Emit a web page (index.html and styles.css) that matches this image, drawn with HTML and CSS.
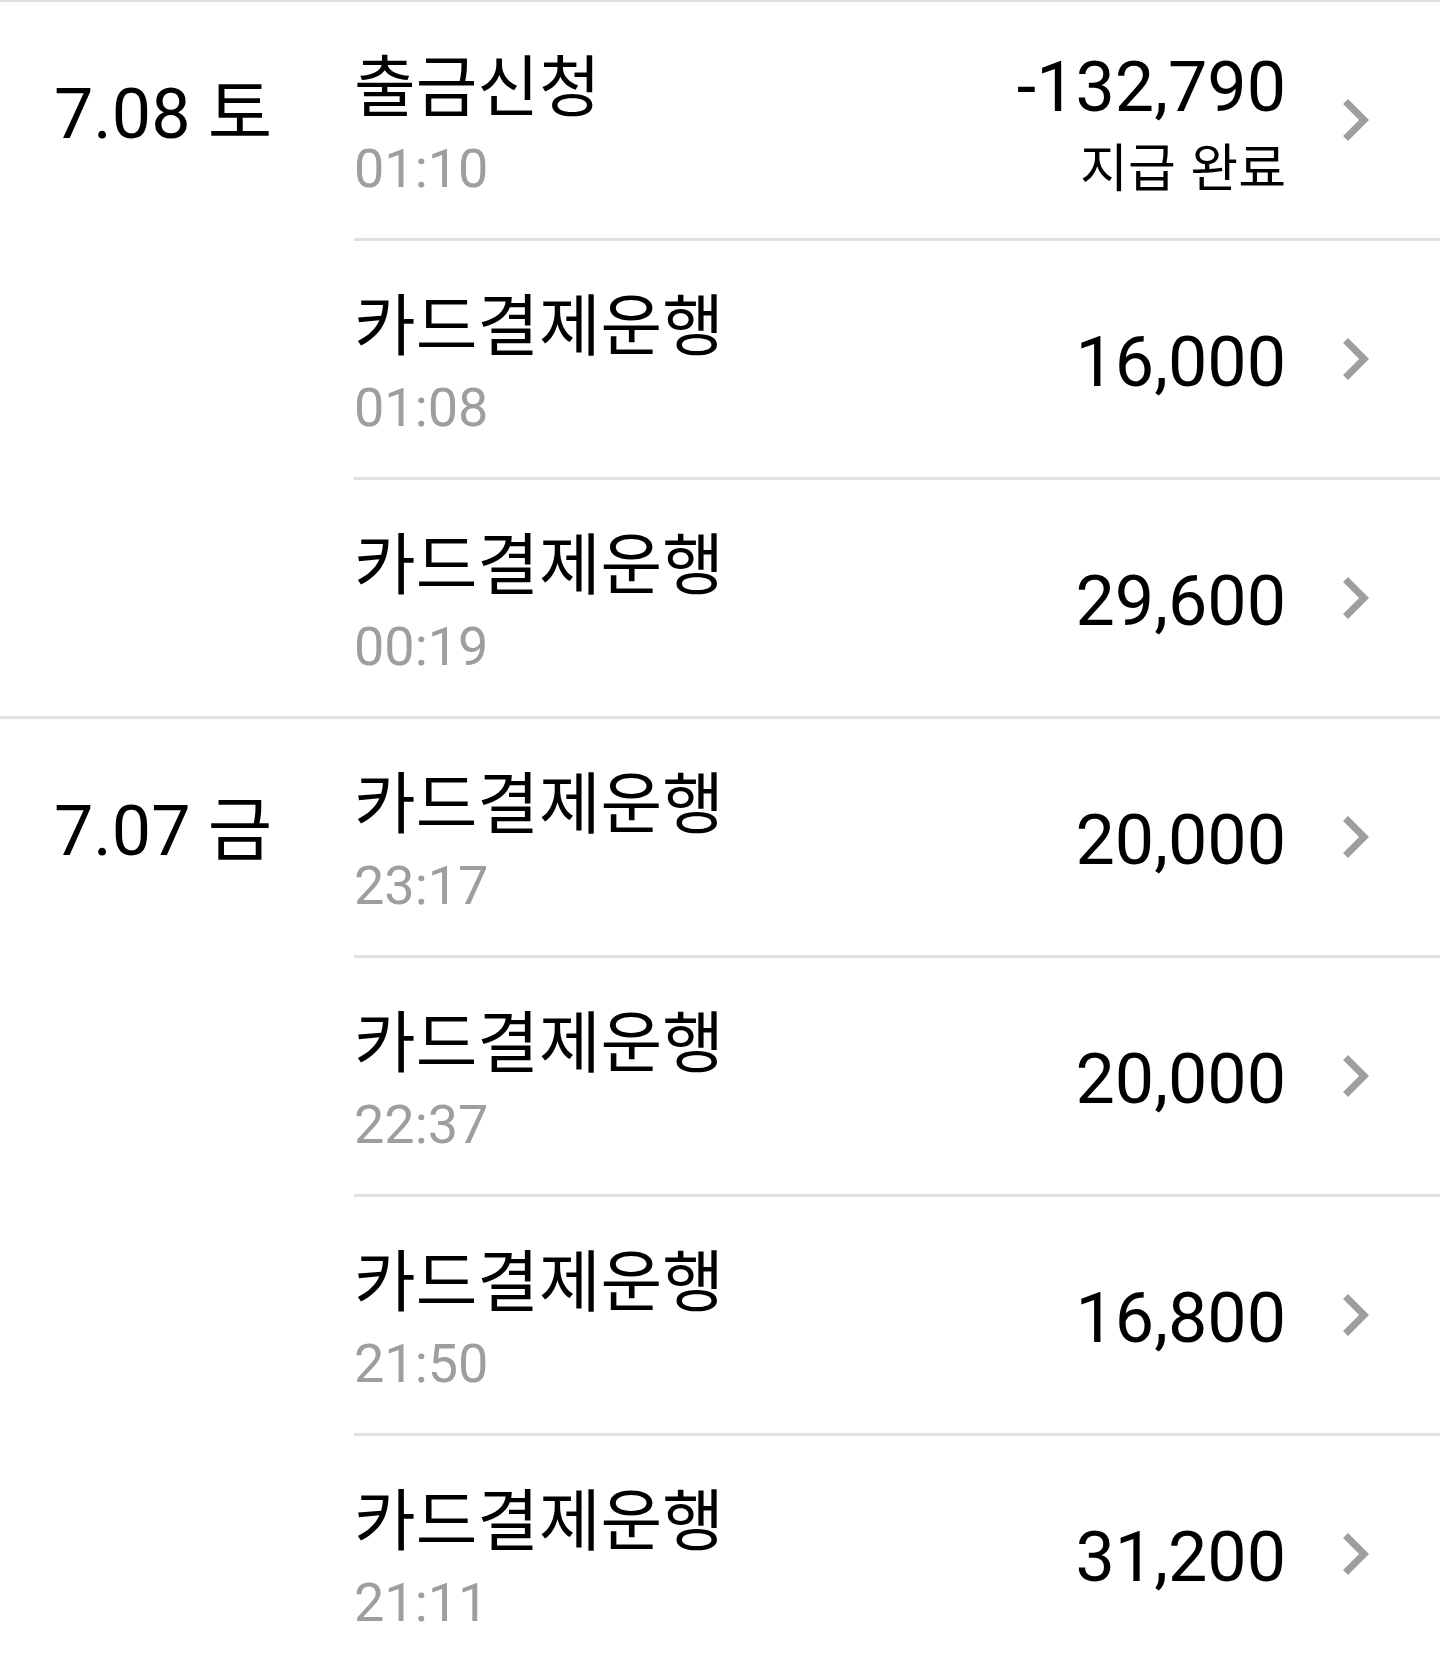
FILE: index.html
```html
<!DOCTYPE html>
<html lang="ko">
<head>
<meta charset="utf-8">
<title>거래내역</title>
<link rel="stylesheet" href="styles.css">
</head>
<body>
<main class="history">
  <section class="group">
    <div class="date">7.08 토</div>
    <ul class="items">
      <li class="item">
        <div class="info"><div class="name">출금신청</div><div class="time">01:10</div></div>
        <div class="money with-status"><div class="amount">-132,790</div><div class="status">지급 완료</div></div>
        <svg class="chev" viewBox="0 0 24 24"><path d="M10 6L8.59 7.41 13.17 12l-4.58 4.59L10 18l6-6z"/></svg>
      </li>
      <li class="item">
        <div class="info"><div class="name">카드결제운행</div><div class="time">01:08</div></div>
        <div class="money"><div class="amount">16,000</div></div>
        <svg class="chev" viewBox="0 0 24 24"><path d="M10 6L8.59 7.41 13.17 12l-4.58 4.59L10 18l6-6z"/></svg>
      </li>
      <li class="item">
        <div class="info"><div class="name">카드결제운행</div><div class="time">00:19</div></div>
        <div class="money"><div class="amount">29,600</div></div>
        <svg class="chev" viewBox="0 0 24 24"><path d="M10 6L8.59 7.41 13.17 12l-4.58 4.59L10 18l6-6z"/></svg>
      </li>
    </ul>
  </section>
  <section class="group">
    <div class="date">7.07 금</div>
    <ul class="items">
      <li class="item">
        <div class="info"><div class="name">카드결제운행</div><div class="time">23:17</div></div>
        <div class="money"><div class="amount">20,000</div></div>
        <svg class="chev" viewBox="0 0 24 24"><path d="M10 6L8.59 7.41 13.17 12l-4.58 4.59L10 18l6-6z"/></svg>
      </li>
      <li class="item">
        <div class="info"><div class="name">카드결제운행</div><div class="time">22:37</div></div>
        <div class="money"><div class="amount">20,000</div></div>
        <svg class="chev" viewBox="0 0 24 24"><path d="M10 6L8.59 7.41 13.17 12l-4.58 4.59L10 18l6-6z"/></svg>
      </li>
      <li class="item">
        <div class="info"><div class="name">카드결제운행</div><div class="time">21:50</div></div>
        <div class="money"><div class="amount">16,800</div></div>
        <svg class="chev" viewBox="0 0 24 24"><path d="M10 6L8.59 7.41 13.17 12l-4.58 4.59L10 18l6-6z"/></svg>
      </li>
      <li class="item">
        <div class="info"><div class="name">카드결제운행</div><div class="time">21:11</div></div>
        <div class="money"><div class="amount">31,200</div></div>
        <svg class="chev" viewBox="0 0 24 24"><path d="M10 6L8.59 7.41 13.17 12l-4.58 4.59L10 18l6-6z"/></svg>
      </li>
    </ul>
  </section>
</main>
</body>
</html>
```

FILE: styles.css
```css
html, body {
  margin: 0;
  padding: 0;
  background: #ffffff;
}

body {
  font-family: Roboto, "Noto Sans CJK KR", sans-serif;
  color: #000000;
  overflow: hidden;
}

.history {
  border-top: 2px solid #e0e0e0;
}

.group {
  display: flex;
  border-bottom: 3px solid #e0e0e0;
}

.date {
  width: 300px;
  flex: 0 0 300px;
  padding: 71px 0 0 54px;
  font-size: 70px;
  line-height: 82px;
  white-space: nowrap;
}

.items {
  flex: 1;
  list-style: none;
  margin: 0;
  padding: 0;
}

.item {
  display: flex;
  align-items: center;
  height: 236px;
  border-bottom: 3px solid #e0e0e0;
}

.item:last-child {
  border-bottom: none;
}

.info {
  align-self: flex-start;
  flex: 1;
  padding-top: 40px;
}

.name {
  font-family: "Noto Sans CJK KR", sans-serif;
  font-size: 67px;
  line-height: 80px;
  white-space: nowrap;
}

.time {
  margin-top: 14px;
  font-size: 54px;
  line-height: 66px;
  color: #9e9e9e;
}

.money {
  display: flex;
  flex-direction: column;
  align-items: flex-end;
  padding-top: 6px;
}

.money.with-status {
  align-self: flex-start;
  padding-top: 44px;
}

.amount {
  font-size: 70px;
  line-height: 82px;
  white-space: nowrap;
}

.status {
  margin-top: 4px;
  font-family: "Noto Sans CJK KR", sans-serif;
  font-size: 52px;
  line-height: 66px;
  white-space: nowrap;
}

.chev {
  flex: 0 0 84px;
  width: 84px;
  height: 84px;
  margin: 0 43px 0 27px;
  fill: #9e9e9e;
}
```
